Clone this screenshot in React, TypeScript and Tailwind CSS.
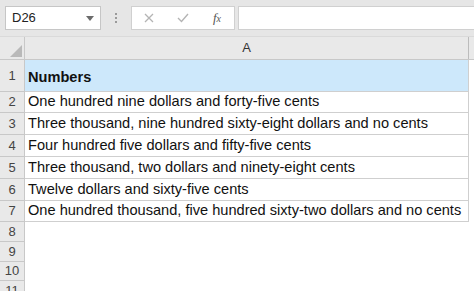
import React from "react";

const rows = [
  { n: 1, text: "Numbers", h: "h-[32px]", head: true },
  { n: 2, text: "One hundred nine dollars and forty-five cents", h: "h-[21px]" },
  { n: 3, text: "Three thousand, nine hundred sixty-eight dollars and no cents", h: "h-[22px]" },
  { n: 4, text: "Four hundred five dollars and fifty-five cents", h: "h-[22px]" },
  { n: 5, text: "Three thousand, two dollars and ninety-eight cents", h: "h-[22px]" },
  { n: 6, text: "Twelve dollars and sixty-five cents", h: "h-[22px]" },
  { n: 7, text: "One hundred thousand, five hundred sixty-two dollars and no cents", h: "h-[21px]" },
];

const empty = [
  { n: 8, h: "h-[20px]" },
  { n: 9, h: "h-[20px]" },
  { n: 10, h: "h-[19px]" },
  { n: 11, h: "h-[20px]" },
];

export default function App() {
  return (
    <div
      className="w-[474px] h-[291px] overflow-hidden bg-white text-[#111]"
      style={{ fontFamily: '"Liberation Sans", Arial, sans-serif' }}
    >
      {/* toolbar */}
      <div className="h-[37px] bg-[#e6e6e6] flex items-center pl-[5px] border-b border-[#dadada]">
        <div className="w-[96px] h-[24px] bg-white border border-[#c6c6c6] flex items-center justify-between pl-[6px] pr-[6px]">
          <span className="text-[13px] text-[#222]">D26</span>
          <svg width="8" height="5" viewBox="0 0 8 5">
            <path d="M0 0 L8 0 L4 5 Z" fill="#6b6b6b" />
          </svg>
        </div>
        <div className="w-[30px] flex flex-col items-center gap-[2px]">
          <span className="w-[2px] h-[2px] bg-[#9a9a9a]" />
          <span className="w-[2px] h-[2px] bg-[#9a9a9a]" />
          <span className="w-[2px] h-[2px] bg-[#9a9a9a]" />
        </div>
        <div className="w-[104px] h-[24px] bg-white border border-[#d0d0d0] flex items-center">
          <div className="w-[34px] flex justify-center">
            <svg width="10" height="10" viewBox="0 0 10 10">
              <path d="M1 1 L9 9 M9 1 L1 9" stroke="#b4b4b4" strokeWidth="1.3" />
            </svg>
          </div>
          <div className="w-[34px] flex justify-center">
            <svg width="12" height="10" viewBox="0 0 12 10">
              <path d="M1 5 L4.5 8.5 L11 1" stroke="#b4b4b4" strokeWidth="1.4" fill="none" />
            </svg>
          </div>
          <div className="w-[34px] flex justify-center">
            <span
              className="text-[13px] italic text-[#555]"
              style={{ fontFamily: '"Liberation Serif", "Times New Roman", serif' }}
            >
              f<span className="text-[10px]">x</span>
            </span>
          </div>
        </div>
        <div className="ml-[3px] flex-1 h-[24px] bg-white border border-[#d0d0d0] border-r-0" />
      </div>

      {/* column header */}
      <div className="h-[23px] flex bg-[#e9e9e9] border-b border-[#c8c8c8]">
        <div className="w-[25px] border-r border-[#c8c8c8] flex items-end justify-end pr-[2px] pb-[2px]">
          <svg width="12" height="12" viewBox="0 0 12 12">
            <path d="M12 0 L12 12 L0 12 Z" fill="#b9b9b9" />
          </svg>
        </div>
        <div className="w-[444px] border-r border-[#bcbcbc] flex items-center justify-center text-[13px] text-[#333]">
          A
        </div>
        <div className="flex-1" />
      </div>

      {/* data rows */}
      {rows.map((r) => (
        <div key={r.n} className={`${r.h} flex`}>
          <div className="w-[25px] bg-[#e9e9e9] border-r border-b border-[#c8c8c8] flex items-center justify-center text-[13px] text-[#444]">
            {r.n}
          </div>
          <div
            className={`w-[444px] border-r border-b border-[#cfcfcf] flex items-center pl-[3px] text-[14.6px] whitespace-nowrap ${
              r.head ? "bg-[#cde8fb] font-bold pt-[4px]" : "bg-white"
            }`}
          >
            {r.text}
          </div>
        </div>
      ))}

      {empty.map((r) => (
        <div key={r.n} className={`${r.h} flex`}>
          <div className="w-[25px] bg-[#e9e9e9] border-r border-b border-[#c8c8c8] flex items-center justify-center text-[13px] text-[#444]">
            {r.n}
          </div>
        </div>
      ))}
    </div>
  );
}
